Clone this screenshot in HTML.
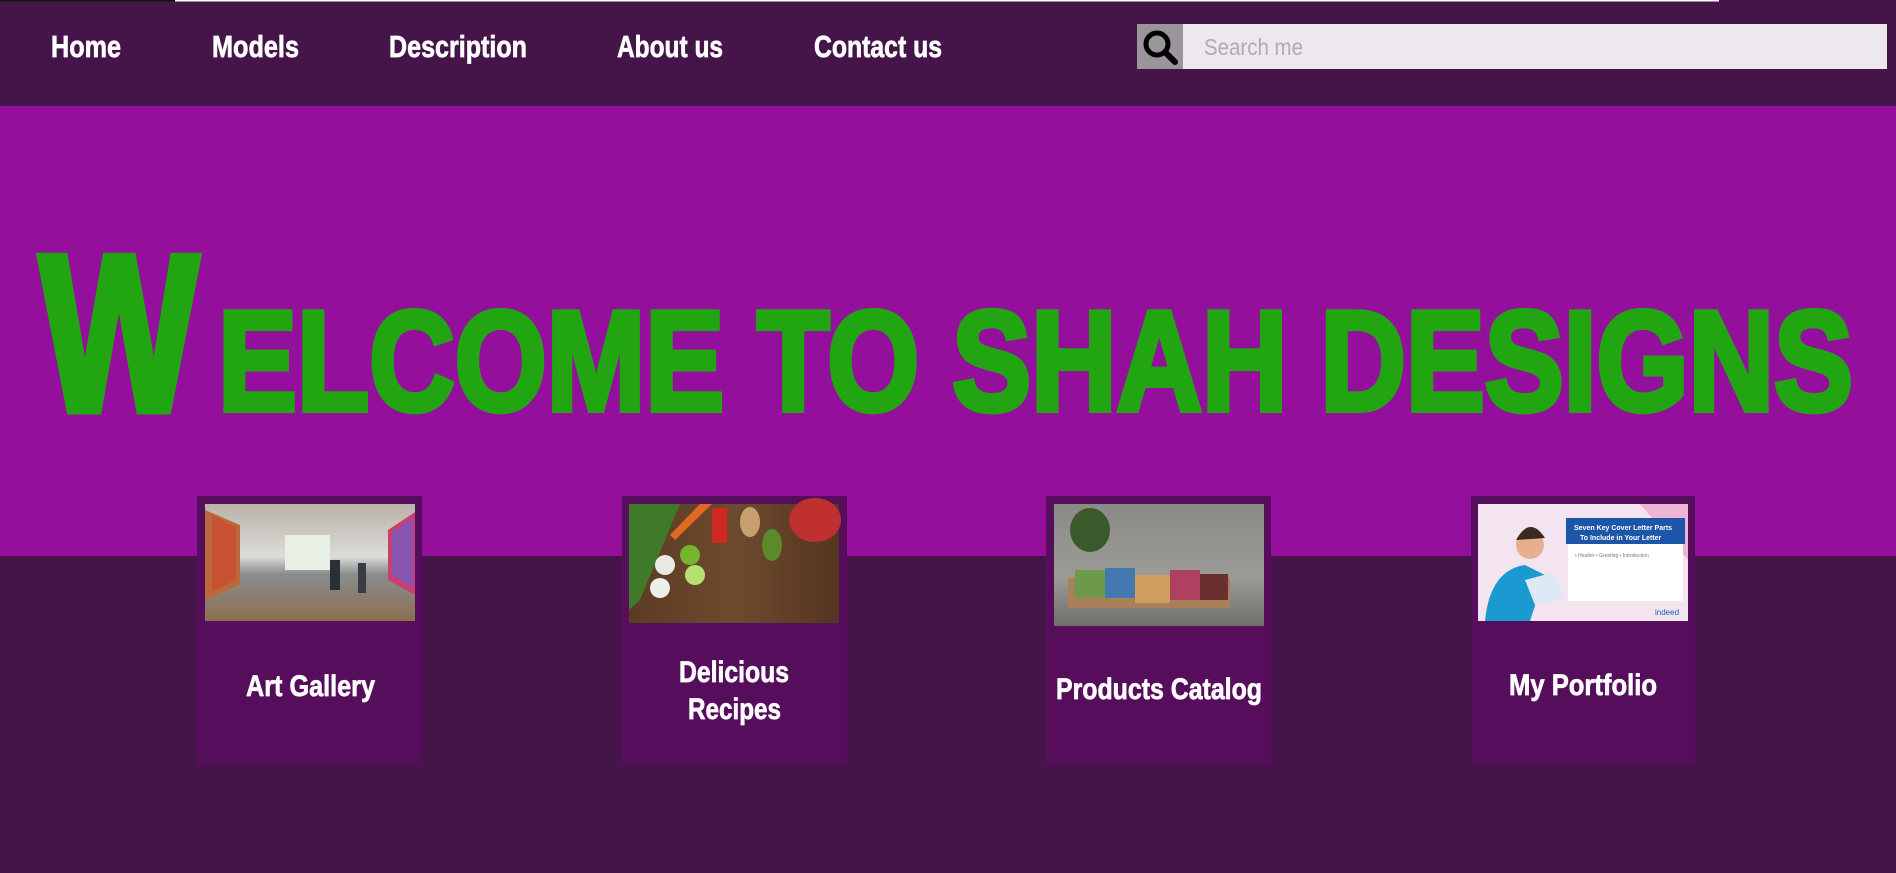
<!DOCTYPE html>
<html><head><meta charset="utf-8"><style>
html,body{margin:0;padding:0;width:1896px;height:873px;overflow:hidden;background:#45154a}
svg{display:block}
.t{font-family:"Liberation Sans Narrow","Liberation Sans",sans-serif;font-weight:bold;fill:#fff;stroke:#fff;stroke-width:0.7}
</style></head><body>
<svg width="1896" height="873" viewBox="0 0 1896 873" xmlns="http://www.w3.org/2000/svg">
<defs>
<linearGradient id="gal" x1="0" y1="0" x2="0" y2="1"><stop offset="0" stop-color="#b9b2a8"/><stop offset=".45" stop-color="#dcdcd8"/><stop offset=".6" stop-color="#8a8d8e"/><stop offset="1" stop-color="#8c6e50"/></linearGradient>
<linearGradient id="wood" x1="0" y1="0" x2="1" y2="0"><stop offset="0" stop-color="#5b3b24"/><stop offset=".5" stop-color="#6e4a2e"/><stop offset="1" stop-color="#553520"/></linearGradient>
<linearGradient id="prod" x1="0" y1="0" x2="0" y2="1"><stop offset="0" stop-color="#8a8a86"/><stop offset=".6" stop-color="#9c9b96"/><stop offset="1" stop-color="#6f6e6a"/></linearGradient>
</defs>
<rect x="0" y="0" width="1896" height="106" fill="#45154a"/>
<rect x="175" y="0" width="1544" height="1.5" fill="#fff"/>
<rect x="0" y="0" width="175" height="1.5" fill="#111"/>
<text class="t" x="51" y="57" font-size="31" textLength="70" lengthAdjust="spacingAndGlyphs">Home</text>
<text class="t" x="212" y="57" font-size="31" textLength="87" lengthAdjust="spacingAndGlyphs">Models</text>
<text class="t" x="389" y="57" font-size="31" textLength="138" lengthAdjust="spacingAndGlyphs">Description</text>
<text class="t" x="617" y="57" font-size="31" textLength="106" lengthAdjust="spacingAndGlyphs">About us</text>
<text class="t" x="814" y="57" font-size="31" textLength="128" lengthAdjust="spacingAndGlyphs">Contact us</text>
<rect x="1137" y="24" width="46" height="45" fill="#9a949b"/>
<rect x="1183" y="24" width="704" height="45" fill="#ece8ed"/>
<circle cx="1157" cy="44" r="11" fill="none" stroke="#000" stroke-width="5"/>
<line x1="1165" y1="52" x2="1175" y2="62" stroke="#000" stroke-width="6" stroke-linecap="round"/>
<text x="1204" y="55" font-family="Liberation Sans Narrow, Liberation Sans, sans-serif" font-size="23" fill="#b0aab3" textLength="99" lengthAdjust="spacingAndGlyphs">Search me</text>
<rect x="0" y="106" width="1896" height="450" fill="#930f9c"/>
<text x="40" y="410" font-family="Liberation Sans Narrow, Liberation Sans, sans-serif" font-weight="bold" font-size="222" fill="#21a511" stroke="#21a511" stroke-width="9" stroke-linejoin="miter" textLength="158" lengthAdjust="spacingAndGlyphs">W</text>
<text x="218" y="410" font-family="Liberation Sans Narrow, Liberation Sans, sans-serif" font-weight="bold" font-size="142" fill="#21a511" stroke="#21a511" stroke-width="6" stroke-linejoin="miter" textLength="1635" lengthAdjust="spacingAndGlyphs">ELCOME TO SHAH DESIGNS</text>
<!-- cards -->
<rect x="197" y="496" width="225" height="270" fill="#560e5c"/>
<rect x="622" y="496" width="225" height="270" fill="#560e5c"/>
<rect x="1046" y="496" width="225" height="270" fill="#560e5c"/>
<rect x="1471" y="496" width="224" height="270" fill="#560e5c"/>
<!-- gallery -->
<rect x="205" y="504" width="210" height="117" fill="url(#gal)"/>
<polygon points="205,510 240,525 240,585 205,600" fill="#b96a3a"/>
<polygon points="212,515 236,527 236,580 212,592" fill="#c95030"/>
<polygon points="415,512 388,530 388,580 415,595" fill="#c84070"/>
<polygon points="413,518 392,532 392,575 413,588" fill="#8a55b0"/>
<rect x="285" y="535" width="45" height="35" fill="#e8efe4"/>
<rect x="330" y="560" width="10" height="30" fill="#2a2e35"/>
<rect x="358" y="563" width="8" height="30" fill="#3a3c44"/>
<!-- recipes -->
<rect x="629" y="504" width="210" height="119" fill="url(#wood)"/>
<polygon points="629,504 680,504 640,600 629,610" fill="#3e7a2a"/>
<polygon points="700,504 712,504 675,540 670,535" fill="#e06a22"/>
<circle cx="690" cy="555" r="10" fill="#73b52c"/>
<circle cx="695" cy="575" r="10" fill="#b6e070"/>
<circle cx="665" cy="565" r="10" fill="#e8e8e4"/>
<circle cx="660" cy="588" r="10" fill="#eeeeea"/>
<rect x="712" y="508" width="15" height="35" fill="#d02a20"/>
<ellipse cx="750" cy="522" rx="10" ry="15" fill="#c8a070"/>
<ellipse cx="772" cy="545" rx="10" ry="16" fill="#5c8a2a"/>
<ellipse cx="815" cy="520" rx="26" ry="22" fill="#c03030"/>
<!-- products -->
<rect x="1054" y="504" width="210" height="122" fill="url(#prod)"/>
<ellipse cx="1090" cy="530" rx="20" ry="22" fill="#3a5a2c"/>
<rect x="1068" y="578" width="162" height="30" fill="#a9805a"/>
<rect x="1075" y="570" width="30" height="28" fill="#6c9a4a"/>
<rect x="1105" y="568" width="30" height="30" fill="#4478b0"/>
<rect x="1135" y="575" width="35" height="28" fill="#d0a060"/>
<rect x="1170" y="570" width="30" height="30" fill="#b04060"/>
<rect x="1200" y="574" width="28" height="26" fill="#6a3030"/>
<!-- portfolio -->
<rect x="1478" y="504" width="210" height="117" fill="#f3e4ef"/>
<polygon points="1640,504 1688,504 1688,560" fill="#f0b4d4"/>
<rect x="1566" y="518" width="119" height="26" fill="#1d56a8"/>
<text x="1574" y="530" font-family="Liberation Sans, sans-serif" font-size="7" font-weight="bold" fill="#fff">Seven Key Cover Letter Parts</text>
<text x="1580" y="540" font-family="Liberation Sans, sans-serif" font-size="7" font-weight="bold" fill="#fff">To Include in Your Letter</text>
<rect x="1568" y="544" width="115" height="57" fill="#fff"/>
<text x="1575" y="557" font-family="Liberation Sans, sans-serif" font-size="5" fill="#777">• Header    • Greeting    • Introduction</text>
<path d="M1485,621 Q1490,570 1525,565 L1545,575 L1530,621 Z" fill="#1a9ad0"/>
<circle cx="1530" cy="545" r="14" fill="#e6b090"/>
<path d="M1516,540 Q1530,515 1545,538 Z" fill="#3a2a20"/>
<polygon points="1525,580 1555,572 1565,600 1535,605" fill="#dfe9f5"/>
<text x="1655" y="615" font-family="Liberation Sans, sans-serif" font-size="8" fill="#2060b0">indeed</text>
<!-- card texts -->
<text class="t" x="246" y="696" font-size="30" textLength="129" lengthAdjust="spacingAndGlyphs">Art Gallery</text>
<text class="t" x="679" y="682" font-size="30" textLength="110" lengthAdjust="spacingAndGlyphs">Delicious</text>
<text class="t" x="688" y="719" font-size="30" textLength="93" lengthAdjust="spacingAndGlyphs">Recipes</text>
<text class="t" x="1056" y="699" font-size="30" textLength="206" lengthAdjust="spacingAndGlyphs">Products Catalog</text>
<text class="t" x="1509" y="695" font-size="30" textLength="148" lengthAdjust="spacingAndGlyphs">My Portfolio</text>
</svg>
</body></html>
